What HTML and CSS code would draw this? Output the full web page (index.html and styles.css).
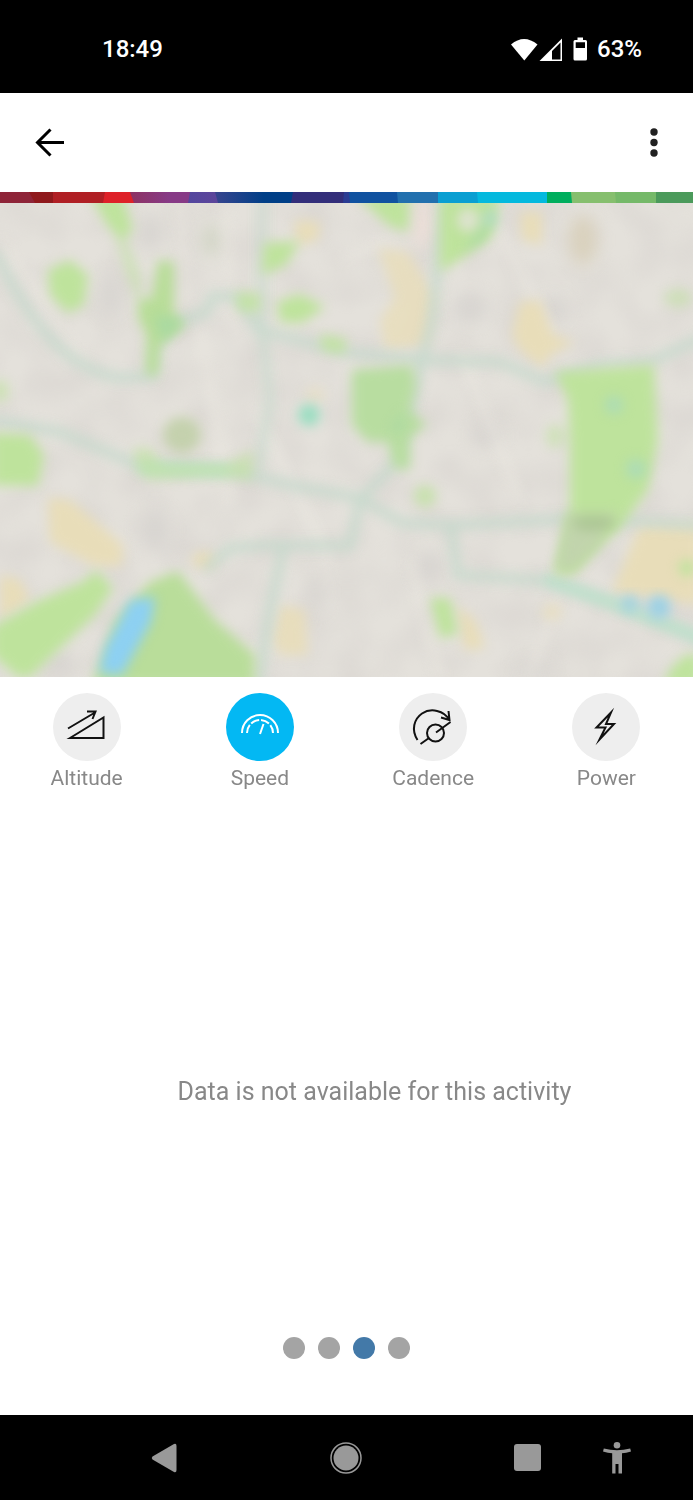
FILE: index.html
```html
<!DOCTYPE html>
<html lang="en">
<head>
  <meta charset="utf-8">
  <meta name="viewport" content="width=device-width, initial-scale=1">
  <title>Activity</title>
  <link rel="stylesheet" href="styles.css">
</head>
<body>
  <div class="status-bar">
    <span class="clock">18:49</span>
    <div class="status-icons">
      <svg width="52" height="24" viewBox="510 36 52 24" fill="#fff">
        <path d="M510 43.5Q523 32.500 536.500 43.500L523.300 59.500Z"/>
        <path fill-rule="evenodd" d="M538.500 60L561 37.500V60ZM551 50V58.500H559.500V41.500Z"/>
      </svg>
      <svg width="14" height="24" viewBox="573 36 14 24" fill="#fff">
        <path fill-rule="evenodd" d="M577.500 36.500H583V39H585.500Q587 39 587 40.500V58Q587 59.500 585.500 59.500H575Q573.500 59.500 573.500 58V40.500Q573.500 39 575 39H577.500ZM575.700 41.300V47H585V41.300Z"/>
      </svg>
      <span>63%</span>
    </div>
  </div>

  <header class="app-bar">
    <button type="button" class="icon-button" aria-label="Back">
      <svg width="30" height="30" viewBox="0 0 30 30" fill="none" stroke="#000" stroke-width="3">
        <path d="M29 14.500H3M15.500 1.500L2.500 14.500L15.500 27.500"/>
      </svg>
    </button>
    <button type="button" class="icon-button" aria-label="More options">
      <svg width="8" height="30" viewBox="0 0 8 30" fill="#212121">
        <circle cx="4" cy="4" r="3.700"/>
        <circle cx="4" cy="14.500" r="3.700"/>
        <circle cx="4" cy="25" r="3.700"/>
      </svg>
    </button>
  </header>

  <svg class="stripe" viewBox="0 0 693 11" preserveAspectRatio="none">
    <defs>
      <linearGradient id="purple"><stop offset="0" stop-color="#8f3059"/><stop offset=".7" stop-color="#873a86"/></linearGradient>
      <linearGradient id="violet"><stop offset="0" stop-color="#50479f"/><stop offset="1" stop-color="#5d459a"/></linearGradient>
      <linearGradient id="blue"><stop offset="0" stop-color="#3d458f"/><stop offset=".65" stop-color="#003f87"/></linearGradient>
    </defs>
    <rect width="693" height="11" fill="#4b9a5b"/>
    <path fill="#75b969" d="M0 0H656V11H0Z"/>
    <path fill="#86bf6e" d="M0 0H615L616 11H0Z"/>
    <path fill="#00ae5e" d="M0 0H571L572 11H0Z"/>
    <path fill="#04b9de" d="M0 0H547V11H0Z"/>
    <path fill="#0a9fd2" d="M0 0H477L478 11H0Z"/>
    <path fill="#2270ae" d="M0 0H438V11H0Z"/>
    <path fill="#1052a0" d="M0 0H397L398 11H0Z"/>
    <path fill="#2b3c93" d="M0 0H349L350 11H0Z"/>
    <path fill="#332e7a" d="M0 0H344L343 11H0Z"/>
    <path fill="url(#blue)" d="M210 0H293L291 11H210Z"/>
    <path fill="url(#violet)" d="M180 0H215L218 11H180Z"/>
    <path fill="url(#purple)" d="M120 0H190L188 11H120Z"/>
    <path fill="#de2128" d="M0 0H130L134 11H0Z"/>
    <path fill="#b01f24" d="M0 0H105L103 11H0Z"/>
    <path fill="#8f191c" d="M0 0H53V11H0Z"/>
    <path fill="#8e2438" d="M0 0H29L35 11H0Z"/>
  </svg>

  <svg class="map" viewBox="0 203 693 474" preserveAspectRatio="xMidYMid slice" role="img" aria-label="Map">
    <defs>
      <filter id="soft" x="-10%" y="-10%" width="120%" height="120%" color-interpolation-filters="sRGB"><feGaussianBlur stdDeviation="6"/></filter>
      <filter id="wide" x="-10%" y="-10%" width="120%" height="120%" color-interpolation-filters="sRGB"><feGaussianBlur stdDeviation="8"/></filter>
      <filter id="blocks" x="0" y="0" width="100%" height="100%" color-interpolation-filters="sRGB">
        <feTurbulence type="fractalNoise" baseFrequency=".03" numOctaves="1" seed="8"/>
        <feColorMatrix values="0 0 0 0 .80  0 0 0 0 .78  0 0 0 0 .77  1.500 0 0 0 -.5"/>
      </filter>
    </defs>
    <rect x="0" y="203" width="693" height="474" fill="#e4e1db"/>
    <rect x="0" y="203" width="693" height="474" filter="url(#blocks)" opacity=".4"/>

    <!-- streets and built-up blocks -->
    <g filter="url(#wide)" fill="#d8d5d1">
      <ellipse cx="150" cy="232" rx="14" ry="18"/>
      <ellipse cx="110" cy="295" rx="12" ry="20"/>
      <ellipse cx="155" cy="530" rx="15" ry="20"/>
      <ellipse cx="315" cy="592" rx="8" ry="20"/>
      <ellipse cx="430" cy="566" rx="13" ry="16"/>
      <ellipse cx="470" cy="308" rx="16" ry="14"/>
      <ellipse cx="555" cy="310" rx="12" ry="12"/>
      <ellipse cx="60" cy="664" rx="16" ry="12"/>
      <ellipse cx="535" cy="670" rx="18" ry="9"/>
      <ellipse cx="488" cy="435" rx="14" ry="12"/>
      <ellipse cx="583" cy="240" rx="14" ry="25" fill="#d9d1bd"/>
      <ellipse cx="211" cy="240" rx="7" ry="16" fill="#ced3c1"/>
      <ellipse cx="422" cy="224" rx="8" ry="24" fill="#ecdcd6"/>
    </g>
    <g filter="url(#soft)" fill="none" stroke="#efece4" stroke-width="5" opacity=".6">
      <path d="M225 203L235 330M180 203L185 300M0 240L90 370M200 330L230 500M255 410L330 560M410 560L440 677M560 590L530 677M460 350L520 500M485 203L550 330M343 260L390 240"/>
    </g>

    <!-- residential -->
    <g filter="url(#soft)" fill="#e8ddb9">
      <path d="M378 248L408 252L435 295L428 345L385 350L380 320L395 298Z" opacity=".8"/>
      <path d="M520 302L540 300L553 335L575 342L550 355L542 368L520 350L512 335Z"/>
      <path d="M48 498L70 500L123 545L122 566L95 566L50 542Z"/>
      <path d="M0 575L20 580L30 600L0 620Z"/>
      <path d="M520 212L542 212L542 245L522 240Z"/>
      <path d="M295 220L320 222L318 240L296 245Z"/>
      <path d="M640 525H700V605L612 592Z"/>
      <path d="M280 605L305 610L308 655L280 655L272 640Z" opacity=".9"/>
      <path d="M455 605L475 620L485 648L465 650Z"/>
      <ellipse cx="204" cy="560" rx="12" ry="8"/>
      <ellipse cx="552" cy="612" rx="10" ry="8" opacity=".7"/>
      <ellipse cx="315" cy="395" rx="10" ry="8" opacity=".5"/>
    </g>

    <!-- cycle routes -->
    <g filter="url(#soft)" fill="none" stroke="#c6d9cc" stroke-width="9" stroke-linejoin="round" opacity=".9">
      <path d="M-8 250L0 262C35 330 70 370 120 378L153 376L156 345L175 323L207 312L212 296L238 297L258 330L345 352L425 360L500 362L545 382L600 365L650 362L693 342L705 338"/>
      <path d="M262 195V330L270 400L258 470" opacity=".75"/>
      <path d="M-8 420L60 432L140 466L230 470L290 485L360 498L402 523L455 525L590 518L705 526"/>
      <path d="M445 195L432 320L412 400L398 460L360 500L350 546L270 545L230 548L205 570"/>
      <path d="M283 548L270 610L258 685"/>
      <path d="M450 523L458 575L550 581L620 606L705 640"/>
    </g>
    <g filter="url(#soft)" fill="none" stroke="#bce1cb" stroke-width="10">
      <path d="M140 468L230 471M545 579L620 606L705 640"/>
    </g>

    <!-- parks -->
    <g filter="url(#soft)" fill="#bee39c">
      <path d="M90 195H122L133 230L122 240L108 226Z"/>
      <path d="M120 225L140 275L142 312L126 270L115 232Z" opacity=".55"/>
      <path d="M48 270L70 260L88 275L84 305L68 313L50 295Z"/>
      <path d="M138 300L152 298L158 260L174 262L174 315L185 325L160 345L158 375H146L147 335L138 318Z" fill="#b8dd98"/>
      <path d="M264 243L300 241L286 265L262 275Z"/>
      <path d="M236 292L260 293L260 312L238 311Z" opacity=".8"/>
      <path d="M277 302L300 294L325 307L302 323L280 322Z"/>
      <path d="M320 334L347 339L344 354L322 350Z" opacity=".85"/>
      <path d="M355 195H410L408 232L390 226Z"/>
      <path d="M440 195H500L492 236L465 256L440 272Z"/>
      <path d="M352 370L412 365L416 385L410 412L427 424L410 438L410 470L394 468L388 442L368 442L352 425Z" fill="#b8dda0"/>
      <path d="M555 372L654 365L658 440L648 490L620 528L600 545L574 574L554 574L570 510V440L568 400Z"/>
      <path d="M-8 433L30 435L44 455L38 486L-8 485Z"/>
      <path d="M-8 380L8 382L8 400L-8 402Z" opacity=".6"/>
      <path d="M133 448L150 448L162 463L190 464L225 465L253 450L252 480L215 476L150 480L138 472Z" opacity=".6"/>
      <path d="M-8 627L40 600L83 582L96 570L113 588L95 615L30 677L18 677L-8 655Z"/>
      <path d="M92 685L115 620L150 582L178 571L215 620L255 655L254 685Z" fill="#b9dd9a"/>
      <path d="M430 598L450 598L458 634L440 638Z"/>
      <path d="M670 670L685 655L700 655V685H664Z"/>
      <ellipse cx="425" cy="496" rx="11" ry="11" opacity=".7"/>
      <ellipse cx="555" cy="436" rx="9" ry="12" opacity=".5"/>
      <ellipse cx="678" cy="298" rx="14" ry="9" opacity=".5"/>
      <ellipse cx="687" cy="568" rx="8" ry="8"/>
    </g>
    <g filter="url(#soft)">
      <ellipse cx="182" cy="435" rx="19" ry="18" fill="#c1cfa9" opacity=".9"/>
      <path fill="#c1d4ac" d="M566 513H618L600 545L574 570L556 570Z"/>
      <ellipse cx="594" cy="523" rx="22" ry="8" fill="#adc795"/>
      <path fill="#a9d9a2" d="M155 315L185 320L162 342ZM490 210L484 240L462 252L478 232ZM405 410L400 435L392 428Z"/>
      <ellipse cx="468" cy="220" rx="11" ry="12" fill="#dde2cf"/>
      <ellipse cx="490" cy="218" rx="7" ry="10" fill="#b1dbc0"/>
      <circle cx="309" cy="415" r="11" fill="#9addc1"/>
      <circle cx="614" cy="405" r="9" fill="#addcb5"/>
      <circle cx="636" cy="469" r="10" fill="#addcb5"/>
    </g>

    <!-- water -->
    <g filter="url(#soft)" fill="#8dd0f2">
      <path d="M130 600L155 597L151 622L122 675L99 673L105 648Z"/>
      <circle cx="630" cy="604" r="9" fill="#a4d3de"/>
      <circle cx="659" cy="607" r="12" fill="#9dd1e4"/>
    </g>
  </svg>

  <main class="details">
    <div class="metrics">
      <button type="button" class="metric">
        <span class="metric-icon">
          <svg width="68" height="68" viewBox="0 0 68 68">
            <path d="M17 45L50.500 24.500V45ZM15 35.500L42 19.500M34 18.500H42.500L39.500 26"/>
          </svg>
        </span>
        <span>Altitude</span>
      </button>
      <button type="button" class="metric active" aria-pressed="true">
        <span class="metric-icon">
          <svg width="68" height="68" viewBox="0 0 68 68">
            <path d="M16 40A18 18 0 0 1 52 40"/>
            <path d="M21 40A13 13 0 0 1 47 40" stroke-dasharray="8.700 2"/>
            <path d="M37.500 31L34 41"/>
          </svg>
        </span>
        <span>Speed</span>
      </button>
      <button type="button" class="metric">
        <span class="metric-icon">
          <svg width="68" height="68" viewBox="0 0 68 68">
            <path d="M18.500 47C12 37 15 26 23 20.500C32 14.500 45 17.500 50.500 27M49.500 18L50.500 27L42 24.500"/>
            <circle cx="36.500" cy="40" r="8.500"/>
            <path d="M51.500 29L37 39.500M30 45L21.500 51"/>
          </svg>
        </span>
        <span>Cadence</span>
      </button>
      <button type="button" class="metric">
        <span class="metric-icon">
          <svg width="68" height="68" viewBox="0 0 68 68">
            <path stroke-miterlimit="10" d="M39 19.500L24.500 34.500H33.500L27.500 46.500L42 31H34Z"/>
          </svg>
        </span>
        <span>Power</span>
      </button>
    </div>

    <p class="empty">Data is not available for this activity</p>

    <div class="pager">
      <button type="button" class="dot" aria-label="Page 1"></button>
      <button type="button" class="dot" aria-label="Page 2"></button>
      <button type="button" class="dot current" aria-label="Page 3"></button>
      <button type="button" class="dot" aria-label="Page 4"></button>
    </div>
  </main>

  <nav class="nav-bar">
    <div class="nav-main">
      <button type="button" class="icon-button" aria-label="Back">
        <svg width="26" height="32" viewBox="0 0 26 32" fill="#999">
          <path d="M23 2Q25.500 1 25.500 4V28Q25.500 31 23 30L1.500 17.500Q0 16 1.500 14.500Z"/>
        </svg>
      </button>
      <button type="button" class="icon-button" aria-label="Home">
        <svg width="32" height="32" viewBox="0 0 32 32" fill="#999">
          <circle cx="16" cy="16" r="12.500"/>
          <circle cx="16" cy="16" r="15" fill="none" stroke="#999" stroke-width="1.500"/>
        </svg>
      </button>
      <button type="button" class="icon-button" aria-label="Recent apps">
        <svg width="27" height="27" viewBox="0 0 27 27" fill="#999">
          <rect width="27" height="27" rx="3"/>
        </svg>
      </button>
    </div>
    <button type="button" class="icon-button" aria-label="Accessibility">
      <svg width="28" height="32" viewBox="0 0 28 32" fill="#999">
        <circle cx="14" cy="3.300" r="3.300"/>
        <path d="M.8 6.500Q14 10 27.200 6.500L28 9.500Q23 11 19 11.200V31.500H15.500V22H12.500V31.500H9.200V11.200Q5 11 0 9.500Z"/>
      </svg>
    </button>
  </nav>
</body>
</html>
```
FILE: styles.css
```css
* {
  box-sizing: border-box;
}

body {
  margin: 0;
  min-height: 100vh;
  display: flex;
  flex-direction: column;
  background: #fff;
  color: #888;
  font-family: Roboto, sans-serif;
}

svg {
  display: block;
}

button {
  margin: 0;
  padding: 0;
  border: 0;
  background: none;
  color: inherit;
  font: inherit;
  cursor: pointer;
}

.status-bar {
  display: flex;
  align-items: center;
  justify-content: space-between;
  height: 93px;
  padding: 4px 51px 0 102px;
  background: #000;
  color: #fff;
  font-size: 24px;
  font-weight: 500;
}

.status-icons {
  display: flex;
  align-items: center;
  gap: 10px;
}

.app-bar {
  display: flex;
  align-items: center;
  justify-content: space-between;
  height: 99px;
  padding: 0 35px;
}

.stripe {
  width: 100%;
  height: 11px;
}

.map {
  width: 100%;
  height: 474px;
}

.details {
  flex: 1;
  display: flex;
  flex-direction: column;
}

.metrics {
  display: grid;
  grid-template-columns: repeat(4, 1fr);
  padding-top: 16px;
}

.metric {
  display: flex;
  flex-direction: column;
  align-items: center;
  gap: 4px;
  font-size: 21px;
  line-height: 26px;
}

.metric-icon {
  border-radius: 50%;
  background: #eee;
}

.metric-icon svg {
  fill: none;
  stroke: #111;
  stroke-width: 2;
}

.active .metric-icon {
  background: #03b8f3;
}

.active svg {
  stroke: #fff;
}

.empty {
  flex: 1;
  display: flex;
  align-items: center;
  justify-content: center;
  margin: 0;
  padding: 56px 0 0 56px;
  font-size: 25px;
  line-height: 32px;
}

.pager {
  display: flex;
  justify-content: center;
  gap: 13px;
  padding-bottom: 56px;
}

.dot {
  width: 22px;
  height: 22px;
  border-radius: 50%;
  background: #a4a4a4;
}

.current {
  background: #4379a8;
}

.nav-bar {
  display: flex;
  align-items: center;
  height: 85px;
  padding: 0 62px 0 151px;
  background: #000;
}

.nav-main {
  flex: 1;
  display: flex;
  align-items: center;
  justify-content: space-between;
  margin-right: 62px;
}
```
